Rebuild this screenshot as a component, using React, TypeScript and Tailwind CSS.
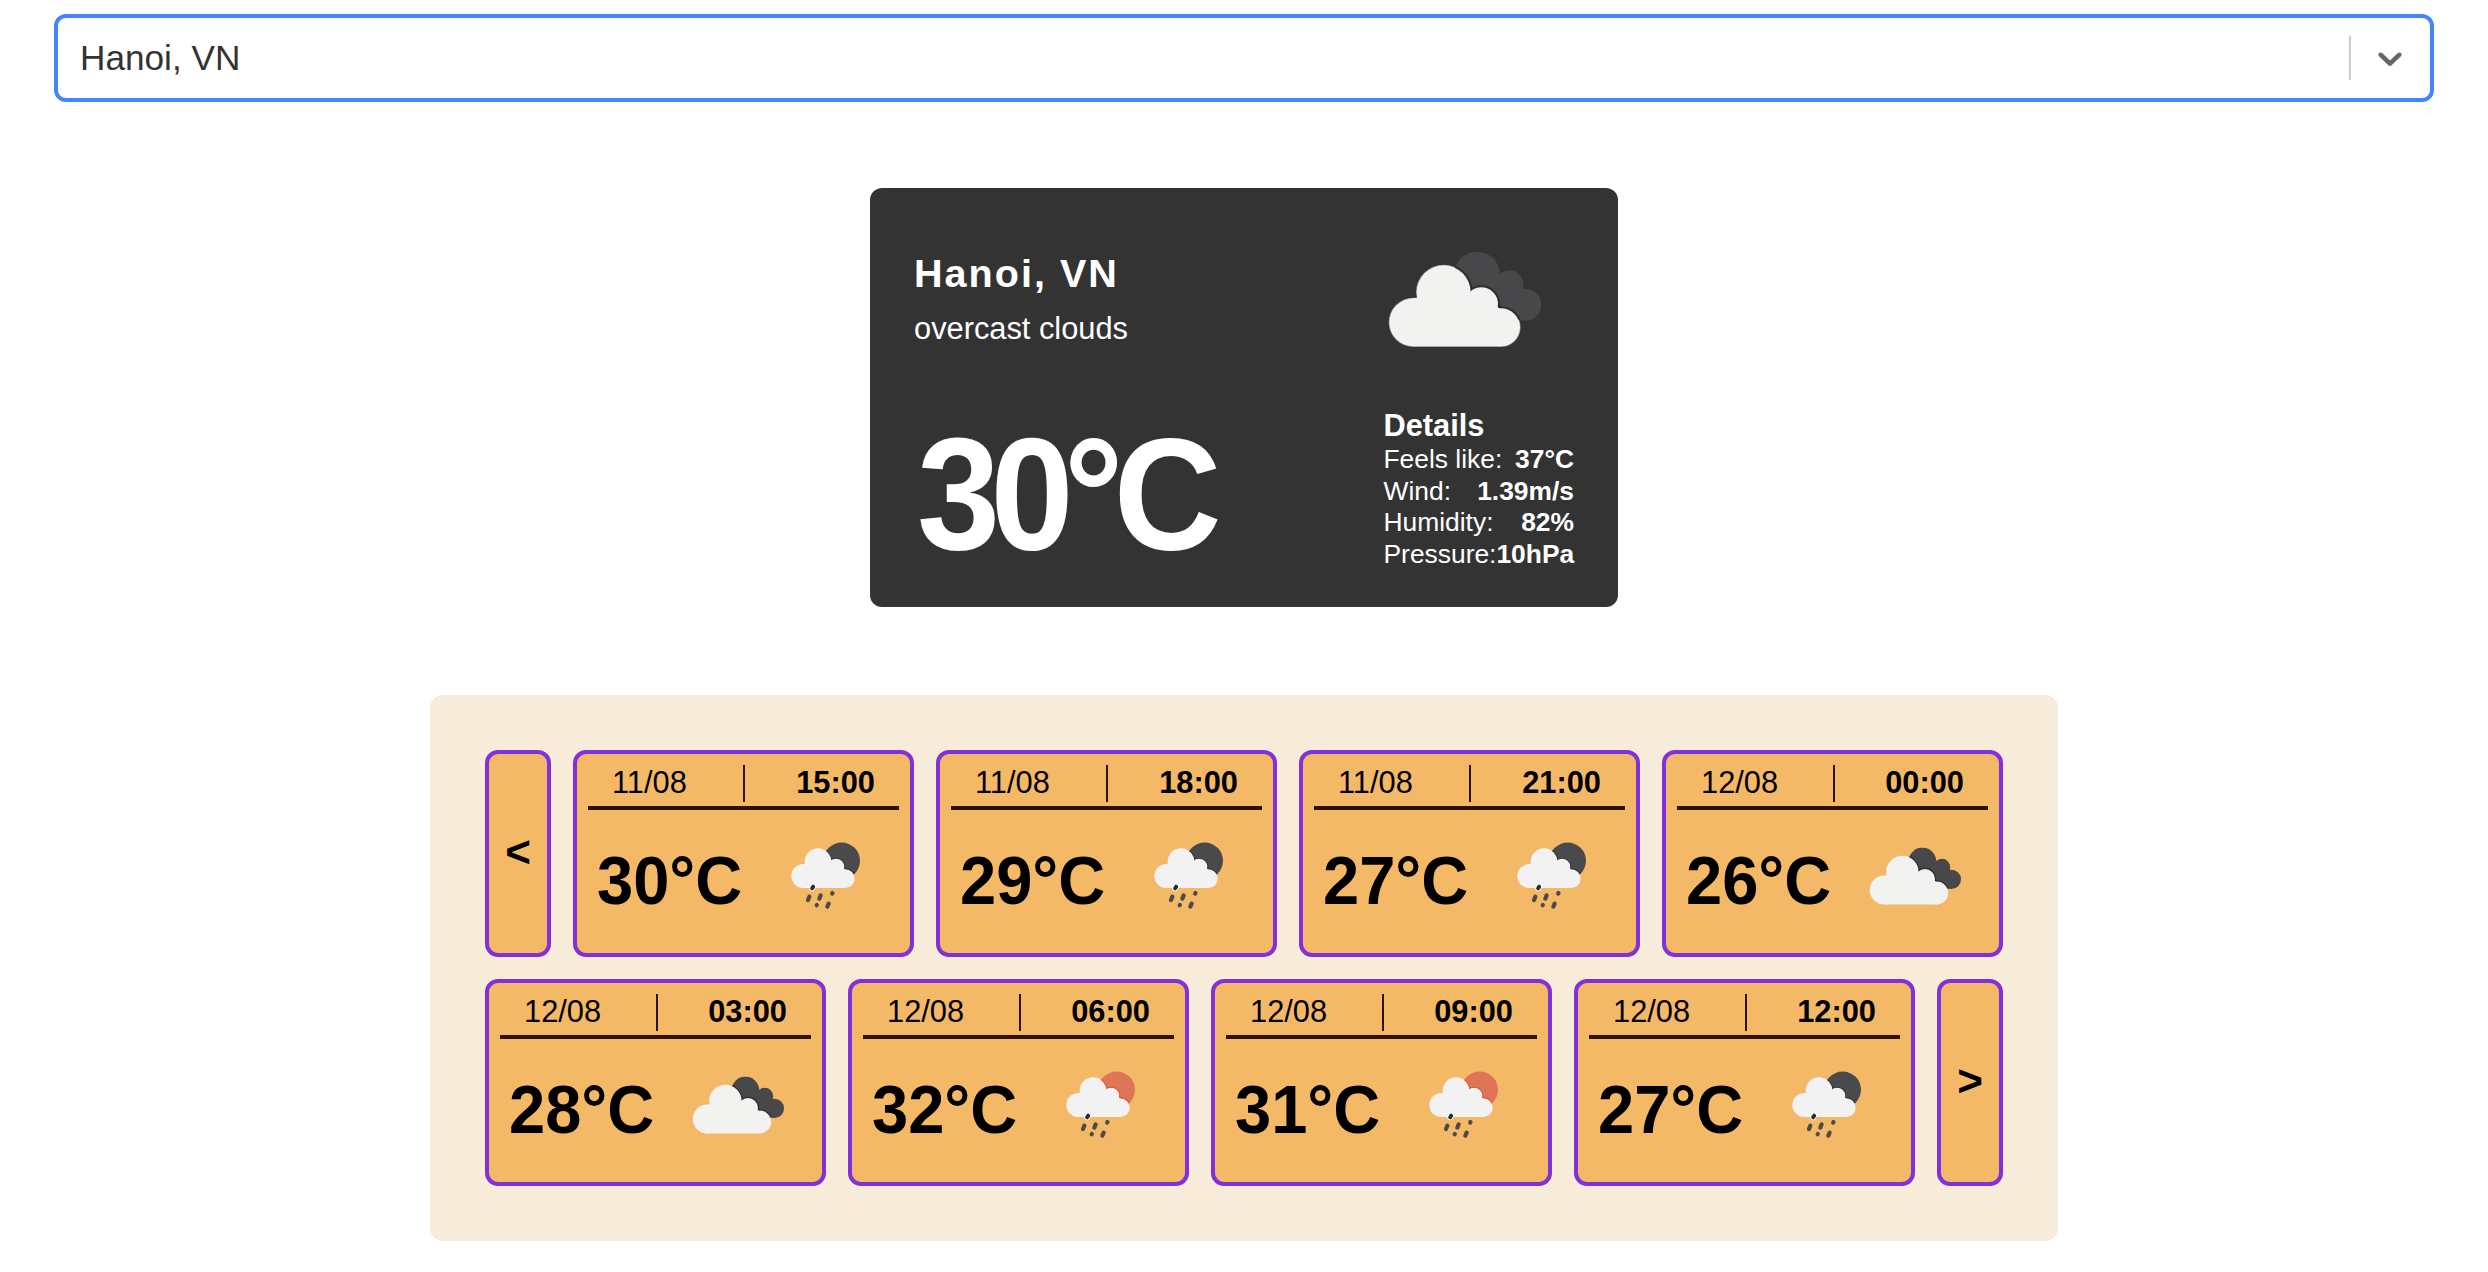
type IconKind = "clouds" | "rain-night" | "rain-day";

type Forecast = { date: string; time: string; temp: string; icon: IconKind };

const firstRow: Forecast[] = [
  { date: "11/08", time: "15:00", temp: "30°C", icon: "rain-night" },
  { date: "11/08", time: "18:00", temp: "29°C", icon: "rain-night" },
  { date: "11/08", time: "21:00", temp: "27°C", icon: "rain-night" },
  { date: "12/08", time: "00:00", temp: "26°C", icon: "clouds" },
];

const secondRow: Forecast[] = [
  { date: "12/08", time: "03:00", temp: "28°C", icon: "clouds" },
  { date: "12/08", time: "06:00", temp: "32°C", icon: "rain-day" },
  { date: "12/08", time: "09:00", temp: "31°C", icon: "rain-day" },
  { date: "12/08", time: "12:00", temp: "27°C", icon: "rain-night" },
];

const details = [
  { label: "Feels like:", value: "37°C" },
  { label: "Wind:", value: "1.39m/s" },
  { label: "Humidity:", value: "82%" },
  { label: "Pressure:", value: "10hPa" },
];

function CloudsIcon({ className, rim = false }: { className: string; rim?: boolean }) {
  const front = (
    <>
      <circle cx="220" cy="426" r="72" />
      <circle cx="311" cy="336" r="81" />
      <circle cx="424" cy="371" r="50" />
      <circle cx="483" cy="441" r="57" />
      <path d="M220 354H300L424 330L483 390V498H220Z" />
    </>
  );
  return (
    <svg viewBox="114 56 600 600" className={className} aria-hidden="true">
      <defs>
        <clipPath id="back-cloud">
          <circle cx="411" cy="283" r="69" />
          <circle cx="508" cy="312" r="42" />
          <circle cx="556" cy="373" r="48" />
          <path d="M411 283L478 275L508 312L549 326L556 373L540 419L411 420Z" />
        </clipPath>
      </defs>
      {rim && (
        <g fill="#8a8a88" stroke="#8a8a88" strokeWidth="4">
          {front}
        </g>
      )}
      <g clipPath="url(#back-cloud)">
        <rect x="330" y="200" width="290" height="240" fill="#48484a" />
        <g fill="#222224" stroke="#222224" strokeWidth="13" strokeOpacity="0.65">
          {front}
        </g>
      </g>
      <g fill="#f2f2f0">{front}</g>
    </svg>
  );
}

function RainIcon({ className, day }: { className: string; day: boolean }) {
  const cloud = (
    <>
      <circle cx="68" cy="139" r="36" />
      <circle cx="112" cy="96" r="40" />
      <circle cx="166" cy="112" r="25" />
      <circle cx="194" cy="147" r="28" />
      <path d="M68 103H105L166 95L194 120V175H68Z" />
    </>
  );
  const shade = day ? "#e0452a" : "#2a2a2c";
  return (
    <svg viewBox="-20 -41 360 360" className={className} aria-hidden="true">
      <defs>
        <clipPath id="disc">
          <circle cx="183" cy="93.500" r="55" />
        </clipPath>
      </defs>
      <circle cx="183" cy="93.500" r="55" fill={day ? "#de7556" : "#4a4a4c"} />
      <g clipPath="url(#disc)" stroke={shade} strokeWidth="6" strokeOpacity="0.65">
        {cloud}
      </g>
      <g fill="#f2f2f2">{cloud}</g>
      <g strokeLinecap="round" fill="none">
        <path d="M94.500 176L97.500 171" stroke="#ffffff" strokeWidth="17" />
        <path d="M94.500 176L97.500 171" stroke="#2c2c2e" strokeWidth="12" />
        <g stroke="#4c4a4a" strokeWidth="12.500">
          <path d="M82 211L86 201" />
          <path d="M116 207L120 197" />
          <path d="M154.500 192L155.500 190" />
          <path d="M108 226.500L108.500 226" />
          <path d="M140 231L144 222" />
        </g>
      </g>
    </svg>
  );
}

function WeatherIcon({ kind, className }: { kind: IconKind; className: string }) {
  return kind === "clouds" ? (
    <CloudsIcon className={className} />
  ) : (
    <RainIcon className={className} day={kind === "rain-day"} />
  );
}

function ForecastCard({ item }: { item: Forecast }) {
  return (
    <article className="h-[207px] w-[341px] shrink-0 rounded-[13px] border-4 border-[#8031db] bg-[#f4b967] p-[11px]">
      <header className="flex h-[45px] items-start justify-between border-b-4 border-[#2d1210] px-6 text-[30.8px] leading-[35px]">
        <span>{item.date}</span>
        <span className="ml-1 h-[37px] w-[2px] bg-[#2d1210]" />
        <span className="font-bold">{item.time}</span>
      </header>
      <div className="flex items-center justify-between pt-1.5 pr-[5px] pl-[9px]">
        <span className="mt-[10px] origin-[0_61px] scale-x-[0.985] scale-y-[1.03] text-[66px] leading-[76px] font-bold">
          {item.temp}
        </span>
        <WeatherIcon kind={item.icon} className="size-[120px]" />
      </div>
    </article>
  );
}

function PageButton({ label, children }: { label: string; children: string }) {
  return (
    <button
      aria-label={label}
      className="flex h-[207px] w-[66px] shrink-0 items-center justify-center rounded-[13px] border-4 border-[#8031db] bg-[#f4b967] pb-1 text-[44px] leading-[50px] font-bold"
    >
      {children}
    </button>
  );
}

export default function App() {
  return (
    <div className="flex h-[1272px] w-[2488px] flex-col items-center overflow-hidden bg-white pt-[14px] font-['Liberation_Sans',Arial,sans-serif] text-black">
      <div className="flex h-[88px] w-[2380px] items-center rounded-xl border-4 border-[#4386fb] pr-5 pl-[22px]">
        <span className="flex-1 text-[35.2px] text-[#333333]">Hanoi, VN</span>
        <span className="h-11 w-[2px] bg-[#cccccc]" />
        <svg viewBox="0 0 20 20" className="ml-[19px] size-10 fill-[#666666]" aria-hidden="true">
          <path d="M4.516 7.548c0.436-0.446 1.043-0.481 1.576 0l3.908 3.747 3.908-3.747c0.533-0.481 1.141-0.446 1.574 0 0.436 0.445 0.408 1.197 0 1.615-0.406 0.418-4.695 4.502-4.695 4.502-0.217 0.223-0.502 0.335-0.787 0.335s-0.57-0.112-0.789-0.335c0 0-4.287-4.084-4.695-4.502s-0.436-1.17 0-1.615z" />
        </svg>
      </div>

      <section className="mt-[86px] flex h-[419px] w-[748px] flex-col rounded-xl bg-[#333333] px-11 text-white">
        <div className="flex h-[211px] justify-between">
          <div className="pt-[62px]">
            <h1 className="text-[39.6px] leading-[46px] font-bold tracking-[2px]">Hanoi, VN</h1>
            <p className="mt-[15px] text-[30.8px] leading-[36px]">overcast clouds</p>
          </div>
          <CloudsIcon rim className="mt-[11px] -mr-1 size-[200px]" />
        </div>
        <div className="flex justify-between">
          <p className="mt-[9px] ml-[3px] origin-[0_142px] scale-x-[0.97] scale-y-[1.03] text-[154px] leading-[176px] font-bold tracking-[-10px]">
            30°C
          </p>
          <div className="mt-[9px] w-[190.5px]">
            <h2 className="text-[30.8px] leading-[36px] font-bold">Details</h2>
            {details.map((row) => (
              <div
                key={row.label}
                className="flex justify-between text-[26.4px] leading-[31.6px] whitespace-nowrap"
              >
                <span>{row.label}</span>
                <span className="font-bold">{row.value}</span>
              </div>
            ))}
          </div>
        </div>
      </section>

      <section className="mt-[88px] flex w-[1628px] flex-col gap-[22px] rounded-[13px] bg-[#f7ebda] p-[55px]">
        <div className="flex gap-[22px]">
          <PageButton label="Previous">{"<"}</PageButton>
          {firstRow.map((item) => (
            <ForecastCard key={item.date + item.time} item={item} />
          ))}
        </div>
        <div className="flex gap-[22px]">
          {secondRow.map((item) => (
            <ForecastCard key={item.date + item.time} item={item} />
          ))}
          <PageButton label="Next">{">"}</PageButton>
        </div>
      </section>
    </div>
  );
}
